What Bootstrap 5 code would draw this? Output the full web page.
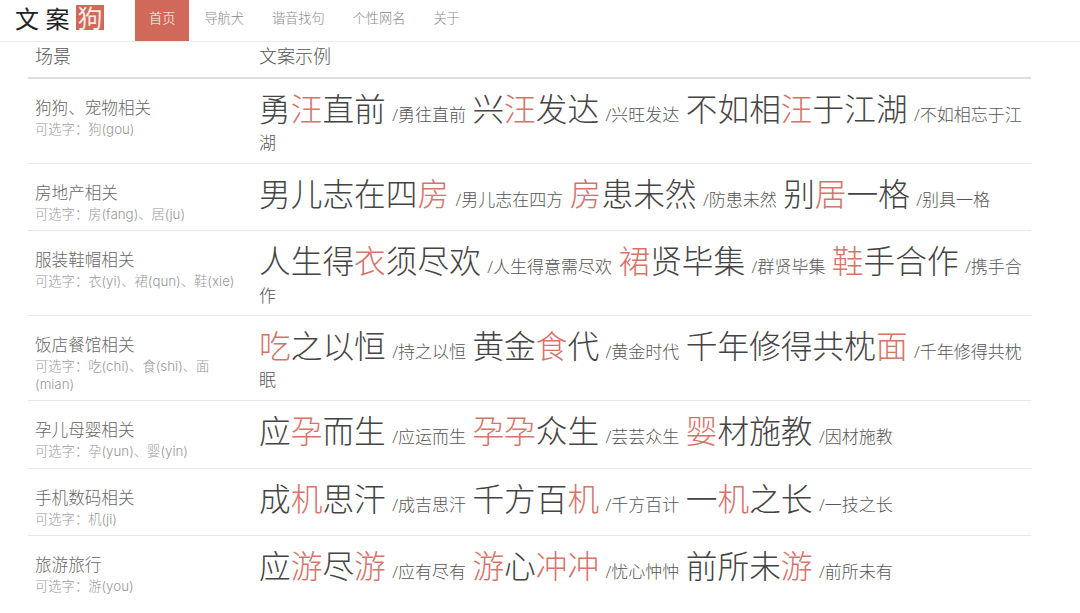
<!DOCTYPE html>
<html lang="zh">
<head>
    <meta charset="UTF-8">
    <meta name="viewport" content="width=device-width, initial-scale=1.0">
    <title>文案狗</title>
    <link href="https://cdn.jsdelivr.net/npm/bootstrap@5.3.2/dist/css/bootstrap.min.css" rel="stylesheet">
    <style>
        body { font-family: "Open Sans", "Noto Sans CJK SC", sans-serif; color: #555; background: #fff; overflow: hidden; font-weight: 300; }
        .top-bar { height: 42px; border-bottom: 1px solid #eee; padding-left: 15px; }
        .logo-box { width: 120px; height: 35px; color: #222; font-family: "Noto Sans CJK SC", sans-serif; font-size: 24px; font-weight: 400; }
        .logo-word { width: 30.5px; line-height: 35px; }
        .logo-dog { width: 28px; height: 25px; margin-top: 5px; line-height: 25px; background: #d0695a; color: #fbe9e5; text-align: center; font-size: 25px; }
        .top-bar .nav-link { color: #888; font-size: 13.2px; line-height: 36px; height: 41px; padding: 0 14px; white-space: nowrap; }
        .top-bar .nav-link.active { background: #d0695a; color: #fff; margin-right: 1px; }
        .copy-wrap { margin: 0 49px 0 28px; }
        .copy-table { table-layout: fixed; margin: 0; --bs-table-color: #555; }
        .copy-table th { font-weight: 300; font-size: 18px; line-height: 26px; padding: 1px 8px 8px 7px; border-bottom: 2px solid #ddd; color: #555; }
        .copy-table td { padding: 8px 8px 7.5px 7px; border-bottom: 1px solid #e8e8e8; vertical-align: top; font-size: 17px; line-height: 1.4; word-spacing: 2px; color: #555; }
        .copy-table tbody tr:last-child td { border-bottom: 0; }
        .col-scene { width: 224px; }
        .scene-name { display: block; font-size: 16.6px; line-height: 24px; margin-top: 9px; color: #666; word-spacing: 0; }
        .scene-pick { display: block; font-family: "Inter", "Noto Sans CJK SC", sans-serif; font-size: 13.3px; line-height: 18px; color: #999; word-spacing: 0; }
        .big-word { font-size: 31.7px; color: #444; }
        .hl { color: #d6736a; }
    </style>
</head>
<body>
    <nav class="top-bar d-flex">
        <div class="logo-box d-flex">
            <span class="logo-word">文</span><span class="logo-word">案</span><span class="logo-dog">狗</span>
        </div>
        <ul class="nav flex-nowrap">
            <li class="nav-item"><a class="nav-link active" href="#">首页</a></li>
            <li class="nav-item"><a class="nav-link" href="#">导航犬</a></li>
            <li class="nav-item"><a class="nav-link" href="#">谐音找句</a></li>
            <li class="nav-item"><a class="nav-link" href="#">个性网名</a></li>
            <li class="nav-item"><a class="nav-link" href="#">关于</a></li>
        </ul>
    </nav>
    <div class="copy-wrap">
        <table class="table copy-table">
            <thead>
                <tr><th class="col-scene">场景</th><th>文案示例</th></tr>
            </thead>
            <tbody>
                <tr>
                    <td><span class="scene-name">狗狗&#x3001;宠物相关</span><span class="scene-pick">可选字&#xFF1A;狗(gou)</span></td>
                    <td><span class="big-word">勇<span class="hl">汪</span>直前</span> /勇往直前 <span class="big-word">兴<span class="hl">汪</span>发达</span> /兴旺发达 <span class="big-word">不如相<span class="hl">汪</span>于江湖</span> /不如相忘于江湖</td>
                </tr>
                <tr>
                    <td><span class="scene-name">房地产相关</span><span class="scene-pick">可选字&#xFF1A;房(fang)&#x3001;居(ju)</span></td>
                    <td><span class="big-word">男儿志在四<span class="hl">房</span></span> /男儿志在四方 <span class="big-word"><span class="hl">房</span>患未然</span> /防患未然 <span class="big-word">别<span class="hl">居</span>一格</span> /别具一格</td>
                </tr>
                <tr>
                    <td><span class="scene-name">服装鞋帽相关</span><span class="scene-pick">可选字&#xFF1A;衣(yi)&#x3001;裙(qun)&#x3001;鞋(xie)</span></td>
                    <td><span class="big-word">人生得<span class="hl">衣</span>须尽欢</span> /人生得意需尽欢 <span class="big-word"><span class="hl">裙</span>贤毕集</span> /群贤毕集 <span class="big-word"><span class="hl">鞋</span>手合作</span> /携手合作</td>
                </tr>
                <tr>
                    <td><span class="scene-name">饭店餐馆相关</span><span class="scene-pick">可选字&#xFF1A;吃(chi)&#x3001;食(shi)&#x3001;面(mian)</span></td>
                    <td><span class="big-word"><span class="hl">吃</span>之以恒</span> /持之以恒 <span class="big-word">黄金<span class="hl">食</span>代</span> /黄金时代 <span class="big-word">千年修得共枕<span class="hl">面</span></span> /千年修得共枕眠</td>
                </tr>
                <tr>
                    <td><span class="scene-name">孕儿母婴相关</span><span class="scene-pick">可选字&#xFF1A;孕(yun)&#x3001;婴(yin)</span></td>
                    <td><span class="big-word">应<span class="hl">孕</span>而生</span> /应运而生 <span class="big-word"><span class="hl">孕孕</span>众生</span> /芸芸众生 <span class="big-word"><span class="hl">婴</span>材施教</span> /因材施教</td>
                </tr>
                <tr>
                    <td><span class="scene-name">手机数码相关</span><span class="scene-pick">可选字&#xFF1A;机(ji)</span></td>
                    <td><span class="big-word">成<span class="hl">机</span>思汗</span> /成吉思汗 <span class="big-word">千方百<span class="hl">机</span></span> /千方百计 <span class="big-word">一<span class="hl">机</span>之长</span> /一技之长</td>
                </tr>
                <tr>
                    <td><span class="scene-name">旅游旅行</span><span class="scene-pick">可选字&#xFF1A;游(you)</span></td>
                    <td><span class="big-word">应<span class="hl">游</span>尽<span class="hl">游</span></span> /应有尽有 <span class="big-word"><span class="hl">游</span>心<span class="hl">冲冲</span></span> /忧心忡忡 <span class="big-word">前所未<span class="hl">游</span></span> /前所未有</td>
                </tr>
            </tbody>
        </table>
    </div>
    <script src="https://cdn.jsdelivr.net/npm/bootstrap@5.3.2/dist/js/bootstrap.bundle.min.js"></script>
</body>
</html>
